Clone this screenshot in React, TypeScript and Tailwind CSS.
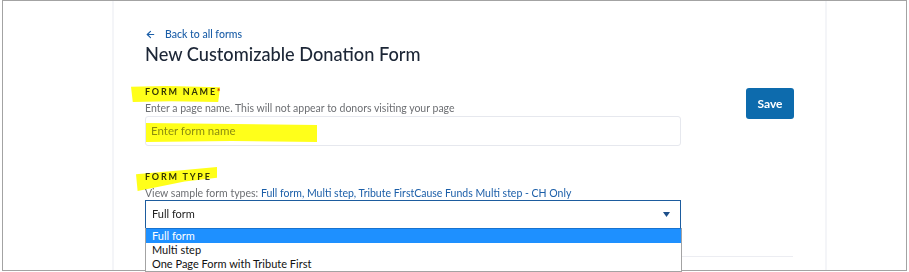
import { ArrowLeft } from "lucide-react";

const font = { fontFamily: "Lato, 'Noto Sans', sans-serif" };

// yellow marker strokes drawn over the screenshot
const Marker = ({ className, points }: { className: string; points: string }) => (
  <svg
    className={`pointer-events-none absolute mix-blend-multiply ${className}`}
    viewBox="0 0 100 100"
    preserveAspectRatio="none"
  >
    <polygon points={points} fill="#ffff1a" />
  </svg>
);

export default function App() {
  return (
    <div className="w-[909px] h-[272px] bg-white overflow-hidden pl-[2px]" style={font}>
      <div className="relative w-[905px] h-[271px] border border-[#a3a3a3] flex">
        <div className="w-[109px] shrink-0" />
        <div className="relative w-[715px] shrink-0 border-x-2 border-[#f4f5f8] pl-[31px] pr-[31px] pt-[25px]">
          <a className="flex items-center gap-[9px] text-[10.5px] leading-[16px] font-medium text-[#1b5ea8]">
            <ArrowLeft className="w-[11px] h-[11px]" strokeWidth={2.5} />
            Back to all forms
          </a>
          <h1 className="text-[18.2px] leading-[24px] font-medium text-[#1c2636]">
            New Customizable Donation Form
          </h1>

          <div className="flex items-start justify-between mt-[20px]">
            <div className="w-[536px]">
              <div className="text-[9px] leading-[12px] font-bold tracking-[0.2em] text-[#33352f]">
                FORM NAME<span className="text-[#d0312d]">*</span>
              </div>
              <div className="text-[10.5px] leading-[14px] text-[#6d6f73] mt-[3px]">
                Enter a page name. This will not appear to donors visiting your page
              </div>
              <div className="h-[30px] mt-[1px] rounded-[3px] border border-[#e6e8ee] flex items-center px-[5px] text-[11.5px] text-[#8d8d8d]">
                Enter form name
              </div>
            </div>
            <button className="w-[48px] h-[31px] mt-[2px] rounded-[3px] bg-[#0d6bad] text-white text-[12px] font-bold">
              Save
            </button>
          </div>

          <div className="w-[536px] mt-[25px]">
            <div className="text-[9px] leading-[12px] font-bold tracking-[0.2em] text-[#33352f]">
              FORM TYPE
            </div>
            <div className="text-[10.5px] leading-[14px] text-[#6d6f73] mt-[3px]">
              View sample form types:{" "}
              <span className="text-[#1b5ea8]">
                Full form, Multi step, Tribute FirstCause Funds Multi step - CH Only
              </span>
            </div>
            <div className="relative h-[29px] border border-[#1d5c9e] border-b-[#8a9bb0] flex items-center justify-between pl-[6px] pr-[10px] text-[11px] text-[#222]">
              Full form
              <svg width="7" height="5" viewBox="0 0 7 5">
                <polygon points="0,0 7,0 3.5,5" fill="#1d4f8a" />
              </svg>
              <div className="absolute left-[-1px] top-[27px] w-[537px] bg-white border border-[#a3a3a3] border-t-0 text-[11px] leading-[14px] text-[#111] z-10">
                <div className="bg-[#1e90ff] text-white px-[6px] border-t border-[#1873d0]">Full form</div>
                <div className="px-[6px]">Multi step</div>
                <div className="px-[6px]">One Page Form with Tribute First</div>
              </div>
            </div>
            <div className="w-[648px] border-b border-[#ecedf2] mt-[27px]" />
          </div>

          <Marker className="left-[17px] top-[85px] w-[89px] h-[16px]" points="0,5 40,0 100,8 98,100 45,95 2,100" />
          <Marker className="left-[32px] top-[122px] w-[171px] h-[19px]" points="0,0 100,10 100,100 50,95 0,100" />
          <Marker className="left-[22px] top-[166px] w-[81px] h-[24px]" points="0,30 60,12 100,0 100,45 60,60 2,100" />
        </div>
      </div>
    </div>
  );
}
